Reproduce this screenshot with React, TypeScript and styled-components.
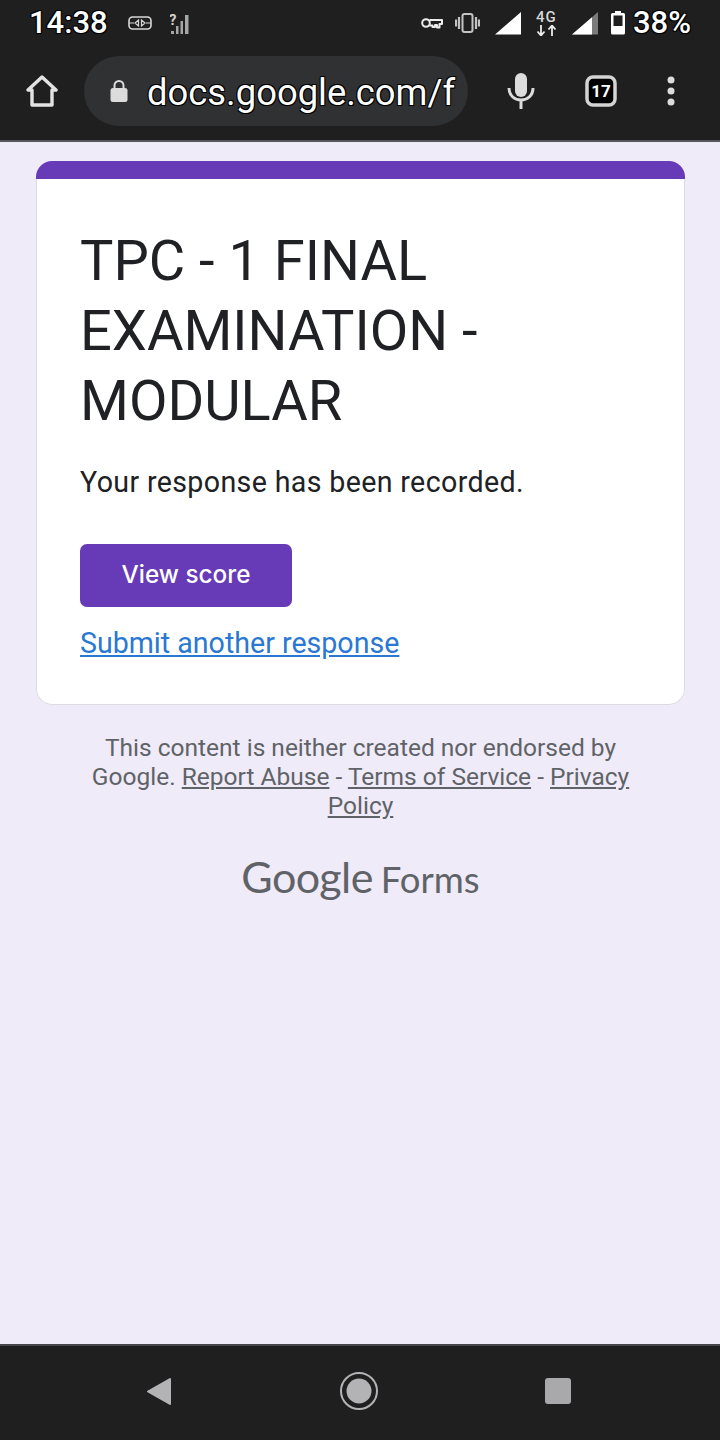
import React from 'react';
import styled, { createGlobalStyle } from 'styled-components';

const GlobalStyle = createGlobalStyle`
  html, body { margin: 0; padding: 0; }
  body { background: #f0ebf8; font-family: Roboto, "Liberation Sans", sans-serif; }
`;

const Screen = styled.div`
  width: 720px;
  height: 1440px;
  display: flex;
  flex-direction: column;
  overflow: hidden;
  background: #f0ebf8;
`;

const Chrome = styled.header`
  height: 140px;
  background: #1f1f20;
  border-bottom: 2px solid #57565f;
  display: flex;
  flex-direction: column;
  flex-shrink: 0;
`;

const StatusBar = styled.div`
  height: 46px;
  display: flex;
  align-items: center;
  padding: 0 29px;
`;

const Outlined = styled.span`
  color: #fff;
  font-size: 31px;
  font-weight: 500;
  line-height: 46px;
  text-shadow: -1px -1px 0 #000, 1px -1px 0 #000, -1px 1px 0 #000, 1px 1px 0 #000, 0 0 2px #000;
`;

const Slot = styled.span<{ $left: number }>`
  display: flex;
  flex-shrink: 0;
  margin-left: ${p => p.$left}px;
`;

const StatusIcons = styled.div`
  display: flex;
  align-items: center;
  margin-left: auto;
`;

const NetType = styled.span`
  display: flex;
  flex-direction: column;
  align-items: center;
  width: 21px;
  margin-left: 15px;
  color: #d8d8d8;
  font-size: 15px;
  font-weight: 500;
  line-height: 15px;
  letter-spacing: 1px;
`;

const Toolbar = styled.div`
  height: 94px;
  display: flex;
  align-items: flex-start;
`;

const ToolSlot = styled.div<{ $width: number }>`
  width: ${p => p.$width}px;
  height: 70px;
  margin-top: 10px;
  display: flex;
  align-items: center;
  justify-content: center;
  flex-shrink: 0;
`;

const Omnibox = styled.div`
  width: 384px;
  height: 70px;
  margin-top: 10px;
  border-radius: 35px;
  background: #303132;
  display: flex;
  align-items: center;
  padding: 0 10px 0 26px;
  box-sizing: border-box;
  flex-shrink: 0;
  overflow: hidden;
`;

const Url = styled.span`
  color: #fff;
  font-size: 36.4px;
  line-height: 66px;
  margin: 4px 0 0 19px;
  white-space: nowrap;
  text-shadow: -1px -1px 0 #000, 1px -1px 0 #000, -1px 1px 0 #000, 1px 1px 0 #000;
`;

const Page = styled.main`
  flex: 1;
  padding: 19px 35px 0 36px;
  display: flex;
  flex-direction: column;
`;

const Card = styled.section`
  border-radius: 16px;
  overflow: hidden;
  height: 544px;
  display: flex;
  flex-direction: column;
`;

const CardBand = styled.div`
  height: 18px;
  background: #673ab7;
`;

const CardBody = styled.div`
  flex: 1;
  background: #fff;
  border: 1px solid #dadce0;
  border-top: none;
  border-radius: 0 0 16px 16px;
  padding: 47px 43px 0 43px;
`;

const Title = styled.h1`
  margin: 0;
  font-size: 56px;
  font-weight: 400;
  line-height: 70px;
  color: #202124;
`;

const Message = styled.p`
  margin: 27px 0 0;
  font-size: 28.6px;
  line-height: 38px;
  letter-spacing: 0.36px;
  color: #202124;
`;

const ScoreButton = styled.button`
  display: block;
  margin-top: 43px;
  width: 212px;
  height: 63px;
  padding: 0 0 4px;
  border: none;
  border-radius: 7px;
  background: #673ab7;
  color: #fff;
  font-family: Inter, Roboto, sans-serif;
  font-size: 24.3px;
  font-weight: 500;
`;

const AnotherLink = styled.a`
  display: inline-block;
  margin-top: 17px;
  font-size: 28.6px;
  line-height: 38px;
  color: #2a78d2;
  text-decoration: underline;
`;

const Disclaimer = styled.div`
  margin: 28px auto 0;
  width: 570px;
  text-align: center;
  font-size: 24.5px;
  line-height: 29px;
  color: #5f6368;
`;

const FooterLink = styled.a`
  color: #5f6368;
  text-decoration: underline;
`;

const Brand = styled.div`
  margin-top: 32px;
  display: flex;
  justify-content: center;
  align-items: baseline;
  gap: 8px;
  color: #5f6368;
  font-family: Lato, sans-serif;
`;

const BrandMain = styled.span`
  font-size: 43px;
  letter-spacing: -0.6px;
  line-height: 50px;
`;

const BrandSub = styled.span`
  font-size: 36.5px;
  line-height: 50px;
`;

const NavBar = styled.nav`
  height: 96px;
  flex-shrink: 0;
  background: #1f1f20;
  border-top: 2px solid #45454a;
  box-sizing: border-box;
  display: flex;
  align-items: center;
  padding: 0 148px 4px 146px;
  justify-content: space-between;
`;

const App = () => (
  <Screen>
    <GlobalStyle />
    <Chrome>
      <StatusBar>
        <Outlined>14:38</Outlined>
        <Slot $left={20}>
          <svg width="24" height="14" viewBox="0 0 24 14" fill="none" stroke="#d8d8d8" strokeWidth="1.6">
            <rect x="1" y="1" width="22" height="12" rx="3.5" />
            <path d="M1 7h5M23 7h-5M10.500 4v6L7 7zM13.500 4v6L17 7z" strokeWidth="1.2" />
          </svg>
        </Slot>
        <Slot $left={18}>
          <svg width="20" height="24" viewBox="0 0 20 24">
            <text x="-1" y="14" fontFamily="Roboto" fontWeight="700" fontSize="15" fill="#d0d0d0">?</text>
            <path d="M1 20h3v3H1zM6 15h2.500v8H6zM10.500 10H13v13h-2.500zM15 4h3.500v19H15z" fill="#a6a6a6" />
          </svg>
        </Slot>
        <StatusIcons>
          <Slot $left={0}>
            <svg width="22" height="14" viewBox="0 0 22 14" fill="none" stroke="#ececec" strokeWidth="2">
              <circle cx="5" cy="7" r="3.800" />
              <path d="M8.500 4h12.500v4h-2.500v3.500H16V9h-2v2h-2.500V9.500H8.500" strokeLinejoin="round" />
            </svg>
          </Slot>
          <Slot $left={12}>
            <svg width="25" height="20" viewBox="0 0 25 20" fill="none" stroke="#c4c4c4">
              <rect x="7.500" y="1" width="10" height="18" rx="2" strokeWidth="2" />
              <path d="M4 4v12M1 6.500v7M21 4v12M24 6.500v7" strokeWidth="2.200" />
            </svg>
          </Slot>
          <Slot $left={15}>
            <svg width="26" height="24" viewBox="0 0 26 24">
              <path d="M0 23.500 26 1v22.500z" fill="#fff" />
            </svg>
          </Slot>
          <NetType>
            4G
            <svg width="21" height="11" viewBox="0 0 21 11" fill="none" stroke="#ececec" strokeWidth="1.800">
              <path d="M5 0v10M1.500 6.500 5 10.500l3.500-4M16 11V1M12.500 4.500 16 .5l3.500 4" />
            </svg>
          </NetType>
          <Slot $left={15}>
            <svg width="26" height="24" viewBox="0 0 26 24">
              <path d="M0 23.500 26 1v22.500z" fill="#7b7b7b" />
              <path d="M0 23.500 20 6.200v17.300z" fill="#fff" />
            </svg>
          </Slot>
          <Slot $left={13}>
            <svg width="14" height="24" viewBox="0 0 14 24">
              <path d="M4 0h6v2h2.500A1.500 1.500 0 0 1 14 3.500V22a1.500 1.500 0 0 1-1.500 1.500h-11A1.500 1.500 0 0 1 0 22V3.500A1.500 1.500 0 0 1 1.500 2H4z" fill="#fff" />
              <rect x="2.500" y="4.500" width="9" height="10.500" fill="#1f1f20" />
            </svg>
          </Slot>
          <Slot $left={8}>
            <Outlined>38%</Outlined>
          </Slot>
        </StatusIcons>
      </StatusBar>
      <Toolbar>
        <ToolSlot $width={84}>
          <svg width="32" height="32" viewBox="0 0 32 32" fill="none" stroke="#e3e3e3" strokeWidth="3.400" strokeLinejoin="round">
            <path d="M2 15 16 2l14 13h-4v15H6V15z" />
          </svg>
        </ToolSlot>
        <Omnibox>
          <svg width="18" height="24" viewBox="0 0 18 24">
            <path d="M4.500 10V6.500a4.500 4.500 0 0 1 9 0V10" fill="none" stroke="#dcdcdc" strokeWidth="2" />
            <rect x="0.500" y="9" width="17" height="14" rx="2.500" fill="#dcdcdc" />
          </svg>
          <Url>docs.google.com/f</Url>
        </Omnibox>
        <ToolSlot $width={106}>
          <svg width="28" height="36" viewBox="0 0 28 36" fill="none" stroke="#dcdcdc">
            <rect x="8" y="0" width="12" height="24" rx="6" fill="#dcdcdc" stroke="none" />
            <path d="M2 15c0 16 24 16 24 0M14 27v9" strokeWidth="3" />
          </svg>
        </ToolSlot>
        <ToolSlot $width={54}>
          <svg width="32" height="32" viewBox="0 0 32 32">
            <rect x="2" y="2" width="28" height="28" rx="6" fill="#000" stroke="#d4d4d4" strokeWidth="3.500" />
            <text x="16" y="22" textAnchor="middle" fontFamily="Roboto" fontWeight="700" fontSize="17" fill="#fff">17</text>
          </svg>
        </ToolSlot>
        <ToolSlot $width={86}>
          <svg width="10" height="30" viewBox="0 0 10 30" fill="#dcdcdc">
            <circle cx="5" cy="4" r="3.500" />
            <circle cx="5" cy="15" r="3.500" />
            <circle cx="5" cy="26" r="3.500" />
          </svg>
        </ToolSlot>
      </Toolbar>
    </Chrome>
    <Page>
      <Card>
        <CardBand />
        <CardBody>
          <Title>TPC - 1 FINAL EXAMINATION - MODULAR</Title>
          <Message>Your response has been recorded.</Message>
          <ScoreButton>View score</ScoreButton>
          <AnotherLink href="#">Submit another response</AnotherLink>
        </CardBody>
      </Card>
      <Disclaimer>
        This content is neither created nor endorsed by Google.{' '}
        <FooterLink href="#">Report Abuse</FooterLink> - <FooterLink href="#">Terms of Service</FooterLink> -{' '}
        <FooterLink href="#">Privacy Policy</FooterLink>
      </Disclaimer>
      <Brand>
        <BrandMain>Google</BrandMain>
        <BrandSub>Forms</BrandSub>
      </Brand>
    </Page>
    <NavBar>
      <svg width="28" height="30" viewBox="0 0 28 30">
        <path d="M2 15.500 24 3v25z" fill="#b3b3b6" stroke="#b3b3b6" strokeWidth="2" strokeLinejoin="round" />
      </svg>
      <svg width="40" height="40" viewBox="0 0 40 40">
        <circle cx="20" cy="20" r="18" fill="none" stroke="#b3b3b6" strokeWidth="2" />
        <circle cx="20" cy="20" r="12.500" fill="#b3b3b6" />
      </svg>
      <svg width="28" height="28" viewBox="0 0 28 28">
        <rect x="1" y="1" width="26" height="26" rx="3" fill="#a9a9ac" />
      </svg>
    </NavBar>
  </Screen>
);

export default App;
